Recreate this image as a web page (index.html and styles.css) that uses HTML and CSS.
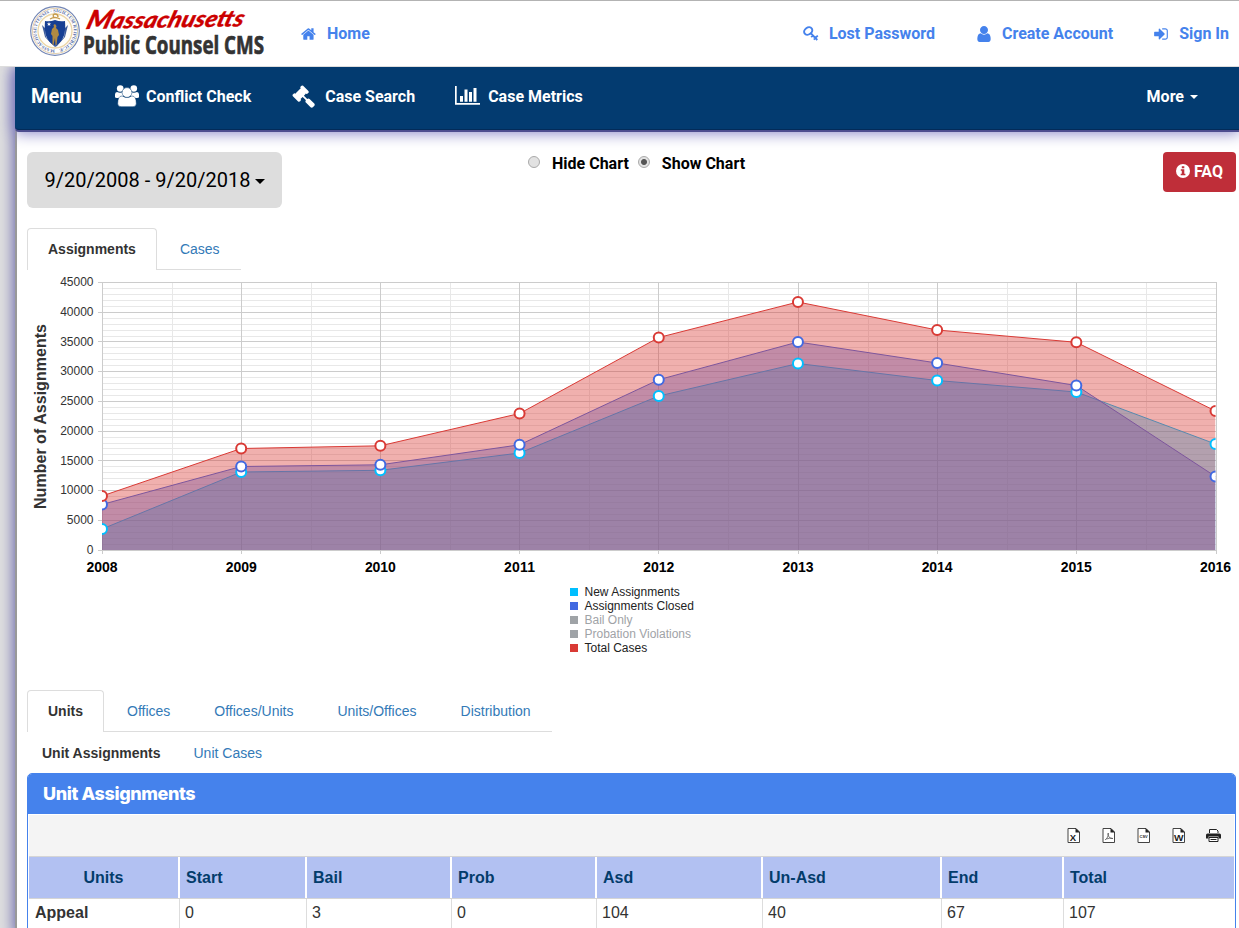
FILE: index.html
```html
<!DOCTYPE html>
<html lang="en">
<head>
<meta charset="utf-8">
<title>Massachusetts Public Counsel CMS</title>
<link rel="stylesheet" href="styles.css">
</head>
<body>
<header class="topbar">
  <svg class="logo" width="241" height="62" viewBox="28 1 241 62" role="img" aria-label="Massachusetts Public Counsel CMS">
    <defs><path id="ring" d="M55 49.5a18.7 18.7 0 1 1 .1 0"/></defs>
    <circle cx="55" cy="31" r="24.3" fill="#fff" stroke="#7386b5" stroke-width="1.2"/>
    <circle cx="55" cy="31" r="22.6" fill="none" stroke="#d9c49c" stroke-width=".8"/>
    <text class="seal-text" textLength="113" lengthAdjust="spacingAndGlyphs"><textPath href="#ring">MASSACHUSETTENSIS · SIGILLUM REIPUBLICÆ</textPath></text>
    <circle cx="55" cy="31" r="17" fill="#fffdf8" stroke="#ecd6a6" stroke-width="1.3"/>
    <path d="M42 25l3 12 9 9 1 1 2-1 8-9 3-12-3 3-1 9-9 9-9-9-1-9z" fill="#3d5c9c"/>
    <path d="M45 21q5 1 10-1 5 2 10 1c1 12-1 20-10 25-9-5-11-13-10-25z" fill="#173f93"/>
    <path d="M55 24l1.500 2-.5 2 2 2 1 5-1.500 2-1 8h-1l-.5-7-1.500 7h-1v-9l-1.500-2 1-5 2-2-.5-2z" fill="#b18a43"/>
    <path d="M49 22l.6 1.500h1.600l-1.300 1 .5 1.600-1.400-1-1.400 1 .5-1.600-1.300-1h1.600z" fill="#fff"/>
    <path d="M50 19q5-3 10 0M54 18q-2-4 1-4t3 3" fill="none" stroke="#c69b4e" stroke-width="1.400"/>
    <text class="logo-script" x="0" y="0" transform="translate(85 29) rotate(-1) skewX(-18)" textLength="157" lengthAdjust="spacingAndGlyphs"><tspan class="cap">M</tspan>assachusetts</text>
    <text class="logo-main" x="83" y="53.500" textLength="181" lengthAdjust="spacingAndGlyphs">Public Counsel CMS</text>
  </svg>
  <a class="toplink home"><svg class="ic" viewBox="0 0 1792 1792"><path d="M1408 992v480q0 26-19 45t-45 19h-384v-384h-256v384h-384q-26 0-45-19t-19-45v-480q0-1 .5-3t.5-3l575-474 575 474q1 2 1 6zm223-69l-62 74q-8 9-21 11h-3q-13 0-21-7l-692-577-692 577q-12 8-24 7-13-2-21-11l-62-74q-8-10-7-23.5t11-21.5l719-599q32-26 76-26t76 26l244 204v-195q0-14 9-23t23-9h192q14 0 23 9t9 23v408l219 182q10 8 11 21.5t-7 23.5z"/></svg>Home</a>
  <nav class="account">
    <a class="toplink lost"><svg class="ic" viewBox="0 0 16 16"><g fill="none" stroke="currentColor"><ellipse cx="5.200" cy="5" rx="4.300" ry="3.400" transform="rotate(-35 5.200 5)" stroke-width="2"/><path d="M7.500 7l6.800 7M12.200 12l2.600-2.300M9.800 9.500l-1.600 1.700M12.200 12l-1.400 1.600" stroke-width="1.800"/></g></svg>Lost Password</a>
    <a class="toplink"><svg class="ic" viewBox="0 0 1536 1536"><path transform="translate(-128 -128)" d="M1536 1399q0 109-62.500 187t-150.500 78h-854q-88 0-150.500-78t-62.500-187q0-85 8.500-160.500t31.500-152 58.500-131 94-89 134.500-34.500q131 128 313 128t313-128q76 0 134.500 34.500t94 89 58.500 131 31.500 152 8.500 160.500zm-256-887q0 159-112.500 271.500t-271.500 112.500-271.500-112.500-112.500-271.500 112.500-271.500 271.500-112.500 271.500 112.500 112.500 271.500z"/></svg>Create Account</a>
    <a class="toplink"><svg class="ic" viewBox="0 0 1792 1792"><path d="M1312 896q0 26-19 45l-544 544q-19 19-45 19t-45-19-19-45v-288h-448q-26 0-45-19t-19-45v-384q0-26 19-45t45-19h448v-288q0-26 19-45t45-19 45 19l544 544q19 19 19 45zm352-352v704q0 119-84.500 203.500t-203.500 84.500h-320q-13 0-22.500-9.500t-9.500-22.500v-64q0-32 32-32h320q66 0 113-47t47-113v-704q0-66-47-113t-113-47h-320q-32 0-32-32v-64q0-32 32-32h320q119 0 203.500 84.500t84.500 203.500z"/></svg>Sign In</a>
  </nav>
</header>

<div class="page">
  <nav class="mainnav">
    <span class="brand">Menu</span>
    <a class="navlink conflict"><svg width="24" height="22" viewBox="0 0 24 22"><g fill="#fff"><circle cx="5.200" cy="3.500" r="3.300"/><circle cx="18.800" cy="3.500" r="3.300"/><path d="M0 12V9.500Q0 7 2 7q3.200 1.500 6 0 2 6-3 6H2q-2 0-2-1zM24 12V9.500Q24 7 22 7q-3.200 1.500-6 0-2 6 3 6h3q2 0 2-1z"/></g><g fill="#fff" stroke="#033b70" stroke-width=".5"><path d="M2.700 18.500q0-7.500 4.300-7.500 5 3 10 0 4.300 0 4.300 7.500 0 3.200-3.200 3.200H6q-3.300 0-3.300-3.200z"/><circle cx="12" cy="7.500" r="4.900"/></g></svg>Conflict Check</a>
    <a class="navlink search"><svg width="23" height="23" viewBox="0 0 1792 1792"><path d="M1771 1536q0 53-37 90l-107 108q-39 37-91 37-53 0-90-37l-363-364q-38-36-38-90 0-53 43-96l-256-256-126 126q-14 14-34 14t-34-14q2 2 12.500 12t12.500 13 10 11.500 10 13.500 6 13.500 5.500 16.500 1.500 18q0 38-28 68-3 3-16.500 18t-19 20.500-18.500 16.500-22 15.500-22 9-26 4.500q-40 0-68-28l-408-408q-28-28-28-68 0-13 4.500-26t9-22 15.500-22 16.500-18.500 20.500-19 18-16.500q30-28 68-28 10 0 18 1.500t16.500 5.500 13.500 6 13.500 10 11.500 10 13 12.500 12 12.500q-14-14-14-34t14-34l348-348q14-14 34-14t34 14q-2-2-12.500-12t-12.500-13-10-11.500-10-13.500-6-13.500-5.500-16.500-1.500-18q0-38 28-68 3-3 16.500-18t19-20.500 18.500-16.500 22-15.500 22-9 26-4.500q40 0 68 28l408 408q28 28 28 68 0 13-4.500 26t-9 22-15.500 22-16.500 18.500-20.500 19-18 16.500q-30 28-68 28-10 0-18-1.500t-16.500-5.500-13.500-6-13.500-10-11.500-10-13-12.500-12-12.500q14 14 14 34t-14 34l-126 126 256 256q43-43 96-43 52 0 91 37l363 363q37 39 37 91z"/></svg>Case Search</a>
    <a class="navlink metrics"><svg width="25" height="20" viewBox="0 0 25 20"><path d="M0 0h1.700v17H25v1.700H0zM5 10h3v5.700H5zM9.500 3.500h3v12.200h-3zM14 6h3v9.700h-3zM18.500 2h3v13.700h-3z"/></svg>Case Metrics</a>
    <a class="navlink more">More<i class="caret"></i></a>
  </nav>

  <main class="content">
    <section class="controls">
      <button class="daterange">9/20/2008 - 9/20/2018<i class="caret"></i></button>
      <div class="toggle">
        <label><span class="radio"></span>Hide Chart</label>
        <label><span class="radio on"></span>Show Chart</label>
      </div>
      <button class="faq"><svg width="14" height="14" viewBox="0 0 14 14"><circle cx="7" cy="7" r="7" fill="#fff"/><path d="M5.800 2.200h2.500v2H5.800zM4.800 5.300h3.500v4.500h1.100v1.500H4.700V9.800h1.100v-3h-1z" fill="#bf2e39"/></svg>FAQ</button>
    </section>

    <ul class="tabs chart-tabs"><li class="tab active">Assignments</li><li class="tab">Cases</li></ul>

    <svg class="chart" width="1222" height="390" viewBox="17 270 1222 390">
      <defs><clipPath id="plot"><rect x="102" y="280" width="1113.500" height="270"/></clipPath></defs>
      <g id="grid"></g>
      <g id="series" clip-path="url(#plot)"></g>
      <g id="labels"></g>
      <text class="axis-title" transform="translate(46 509) rotate(-90)" textLength="185">Number of Assignments</text>
      <g class="legend">
        <rect x="570" y="588" width="8" height="8" fill="#00bfff"/><text x="584.500" y="596">New Assignments</text>
        <rect x="570" y="602" width="8" height="8" fill="#4169e1"/><text x="584.500" y="610">Assignments Closed</text>
        <rect x="570" y="616" width="8" height="8" fill="#9fa3a7"/><text class="off" x="584.500" y="624">Bail Only</text>
        <rect x="570" y="630" width="8" height="8" fill="#9fa3a7"/><text class="off" x="584.500" y="638">Probation Violations</text>
        <rect x="570" y="644" width="8" height="8" fill="#d93a35"/><text x="584.500" y="652">Total Cases</text>
      </g>
    </svg>

    <ul class="tabs unit-tabs"><li class="tab active">Units</li><li class="tab">Offices</li><li class="tab">Offices/Units</li><li class="tab">Units/Offices</li><li class="tab">Distribution</li></ul>
    <div class="subtabs"><b>Unit Assignments</b><a>Unit Cases</a></div>

    <section class="panel">
      <h2 class="panel-title">Unit Assignments</h2>
      <div class="panel-body">
        <div class="toolbar">
          <svg class="tool" viewBox="0 0 15 15"><path class="doc" d="M2 .5h8l3.500 3.500v10.500H2z"/><path class="fold" d="M9.500 0L14 4.500H9.500z"/><text x="3.800" y="12.800">X</text></svg>
          <svg class="tool" viewBox="0 0 15 15"><path class="doc" d="M2 .5h8l3.500 3.500v10.500H2z"/><path class="fold" d="M9.500 0L14 4.500H9.500z"/><path class="doc thin" d="M4 12q2.400-1.500 3.200-4.500.5-2 0-2.500-.8 1 .2 3 1.500 3 4.500 2.500-3-1-6.500.5"/></svg>
          <svg class="tool" viewBox="0 0 15 15"><path class="doc" d="M2 .5h8l3.500 3.500v10.500H2z"/><path class="fold" d="M9.500 0L14 4.500H9.500z"/><text class="csv" x="3.500" y="9.500">CSV</text></svg>
          <svg class="tool" viewBox="0 0 15 15"><path class="doc" d="M2 .5h8l3.500 3.500v10.500H2z"/><path class="fold" d="M9.500 0L14 4.500H9.500z"/><text x="3" y="12.800" textLength="9.500" lengthAdjust="spacingAndGlyphs">W</text></svg>
          <svg class="tool" viewBox="0 0 15 15"><path d="M3.500 5V1.500h7L12 3v2" fill="#fff" stroke="#222"/><path d="M0 7q0-1.500 1.500-1.500h12Q15 5.500 15 7v3.500h-2.500v-2h-10v2H0z" fill="#222"/><path d="M3 9.500h9V13.500H3zM4.500 11.500h6" fill="#fff" stroke="#222"/></svg>
        </div>
        <div class="row head"><span>Units</span><span>Start</span><span>Bail</span><span>Prob</span><span>Asd</span><span>Un-Asd</span><span>End</span><span>Total</span></div>
        <div class="row"><span>Appeal</span><span>0</span><span>3</span><span>0</span><span>104</span><span>40</span><span>67</span><span>107</span></div>
      </div>
    </section>
  </main>
</div>
<script src="chart.js"></script>
</body>
</html>
```
FILE: chart.js
```js
const X0 = 102, DX = 139.19, BOTTOM = 550, PX = 267.5 / 45000;
const xs = [...Array(9).keys()].map(i => X0 + i * DX);
const snap = v => Math.floor(v) + 0.5;
let grid = '';
for (let v = 1000; v < 45000; v += 1000) {
  const y = snap(BOTTOM - v * PX);
  if (v % 5000) grid += `<path class="minor" d="M102 ${y}H1216"/>`;
}
xs.slice(0, 8).forEach(x => grid += `<path class="minor" d="M${snap(x + DX / 2 + 0.6)} 282V550"/>`);
for (let v = 0; v <= 45000; v += 5000) grid += `<path class="major" d="M98 ${snap(BOTTOM - v * PX)}H1217"/>`;
xs.forEach((x, i) => grid += `<path class="major" d="M${i === 8 ? 1216.5 : snap(x + 0.1)} 282V554"/>`);
document.getElementById('grid').innerHTML = grid;

// Vertical positions of each yearly value, 2008 to 2016
const series = [
  ['#00bfff', [529, 472, 470.3, 453, 396, 363.5, 380.5, 392, 444]],
  ['#4169e1', [504.5, 466.5, 464.8, 444.8, 379.7, 342, 363, 385.5, 476.5]],
  ['#d93a35', [496, 448.5, 445.8, 413.5, 337.5, 302, 330, 342.3, 411]]
];
let out = '';
series.forEach(([c, ys]) => {
  const pts = ys.map((y, i) => `${xs[i]},${y}`).join(' ');
  out += `<polygon points="102,550 ${pts} ${xs[8]},550" fill="${c}" fill-opacity=".4"/><polyline points="${pts}" fill="none" stroke="${c}"/>`;
});
// The translucent layers tint the lines beneath, the markers stay on top
series.forEach(([c, ys]) => ys.forEach((y, i) => {
  out += `<circle cx="${xs[i]}" cy="${y}" r="5" fill="#fff" stroke="${c}" stroke-width="2"/>`;
}));
document.getElementById('series').innerHTML = out;

let labels = '';
for (let v = 0; v <= 45000; v += 5000) labels += `<text class="ytick" x="93.5" y="${Math.round(BOTTOM - v * PX + 3.8)}">${v}</text>`;
xs.forEach((x, i) => labels += `<text class="xtick" x="${x}" y="572" textLength="31">${2008 + i}</text>`);
document.getElementById('labels').innerHTML = labels;
```
FILE: styles.css
```css
* { box-sizing: border-box; }
body { margin: 0; height: 928px; overflow: hidden; background: #e0e0e0; font-family: "Liberation Sans", Arial, sans-serif; font-size: 14px; color: #333; }
svg { fill: currentColor; flex: none; }
.topbar { position: relative; z-index: 2; display: flex; align-items: center; height: 67px; padding: 0 10px 0 28px; background: #fff; border-top: 1px solid #b3b3b3; border-bottom: 1px solid #ddd; }
.logo { display: block; margin-bottom: 3px; overflow: visible; }
.seal-text { font: bold 4.5px "Liberation Serif", serif; fill: #4f68a5; }
.logo-script { font: italic 900 23px Lato, sans-serif; fill: #c00; stroke: #c00; stroke-width: .3px; }
.logo-script .cap { font-size: 26px; }
.logo-main { font: bold 25px "Open Sans", sans-serif; fill: #333; stroke: #333; stroke-width: .7px; }
.toplink { display: flex; align-items: center; gap: 10px; font: bold 16px/20px Roboto, sans-serif; color: #4582ec; white-space: nowrap; }
.toplink.home { margin-left: 32px; }
.ic { width: 16px; height: 16px; }
.account { display: flex; gap: 40px; margin-left: auto; }
.lost { margin-right: 1px; }
.page { position: relative; z-index: 1; height: 870px; margin-left: 15px; background: #fff; box-shadow: 0 0 15px #4f4ca0; }
.mainnav { position: relative; z-index: 1; display: flex; align-items: center; height: 63px; padding: 0 41px 4px 16px; background: #033b70; border-bottom: 1px solid #032b59; border-radius: 0 0 0 4px; box-shadow: 0 2px 0 #4d4d8f, 0 2px 15px 1px #8582c6; color: #fff; }
.brand { font: bold 20px Roboto, sans-serif; width: 84px; }
.navlink { display: flex; align-items: center; font: bold 16px Roboto, sans-serif; white-space: nowrap; }
.conflict { gap: 7px; }
.search { margin-left: 41px; gap: 10px; }
.metrics { margin-left: 40px; gap: 8px; }
.more { margin-left: auto; }
.caret { display: inline-block; border: 4px solid transparent; border-top-color: currentColor; border-bottom: 0; margin: 2px 0 0 6px; }
.content { height: 807px; padding: 22px 3px 0 10px; border-left: 2px solid #999; background: #fff; }
.controls { display: grid; grid-template-columns: 501px 1fr auto; align-items: start; height: 76px; }
button { border: 0; padding: 0; }
.daterange { display: flex; align-items: center; justify-content: center; width: 255px; height: 56px; padding-left: 1px; background: #ddd; border-radius: 6px; font: 20px Roboto, sans-serif; color: #000; }
.daterange .caret { border-width: 5px 5px 0; margin-left: 5px; }
.toggle { display: flex; gap: 9px; font: bold 16px/24px Roboto, sans-serif; color: #000; }
.toggle label { display: flex; align-items: center; gap: 12px; }
.radio { width: 12px; height: 12px; margin-bottom: 4px; border: 1px solid #aaa; border-radius: 50%; background: #e2e2e2; }
.radio.on { background: radial-gradient(circle, #555 0 2.5px, #e2e2e2 3.5px); }
.faq { display: flex; align-items: center; justify-content: center; gap: 4px; width: 73px; height: 40px; padding-bottom: 2px; border-radius: 4px; background: #bf2e39; color: #fff; font: bold 16px Roboto, sans-serif; }
.tabs { display: flex; width: max-content; height: 42px; margin: 0; padding: 0; list-style: none; border-bottom: 1px solid #ddd; }
.tab { height: 42px; padding: 0 21px; margin-right: 2px; line-height: 42px; color: #337ab7; }
.tab:last-child { margin-right: 0; }
.tab.active { font-weight: bold; color: #333; background: #fff; border: 1px solid #ddd; border-bottom: 0; border-radius: 4px 4px 0 0; padding: 0 20px; line-height: 40px; }
.chart { display: block; margin-left: -10px; }
.minor { stroke: #e8e8e8; fill: none; }
.major { stroke: #ccc; fill: none; }
.ytick { font-size: 12px; text-anchor: end; fill: #333; }
.xtick { font-size: 14px; font-weight: bold; text-anchor: middle; fill: #000; }
.axis-title { font-size: 16px; font-weight: bold; fill: #333; }
.legend { font-size: 12px; fill: #222; }
.legend .off { fill: #9fa3a7; }
.unit-tabs { margin-top: 30px; }
.subtabs { display: flex; gap: 33px; height: 41px; padding-left: 15px; line-height: 42px; }
.subtabs a { color: #337ab7; }
.panel { height: 180px; border: 1px solid #4582ec; border-radius: 5px 5px 0 0; }
.panel-title { height: 40px; margin: 0; padding-left: 15px; background: #4582ec; border-radius: 4px 4px 0 0; color: #fff; font: 800 18px/40px Inter, sans-serif; letter-spacing: -.4px; }
.panel-body { padding: 1px; }
.toolbar { display: flex; justify-content: flex-end; gap: 20px; height: 42px; padding: 13px 13px 0; background: #f4f4f4; border-bottom: 1px solid #d5d5d5; }
.tool { width: 15px; height: 15px; }
.doc { fill: #fff; stroke: #444; }
.doc.thin { fill: none; stroke-width: .7px; }
.fold { fill: #222; }
.tool text { font: bold 9.5px "Liberation Sans", sans-serif; fill: #222; }
.tool .csv { font: bold 4px "Liberation Sans", sans-serif; }
.row { display: grid; grid-template-columns: 151px 127px 145px 145px 166px 179px 122px 1fr; height: 42px; font-size: 16px; }
.row span { padding: 5px 0 0 5px; border-right: 1px solid #ddd; }
.row span:last-child { border-right: 0; }
.row span:first-child { font-weight: bold; padding-left: 6px; }
.head { border-bottom: 1px solid #d5d5d5; font-weight: bold; color: #033c6b; }
.head span { background: #b2c1f2; border-right: 2px solid #fff; padding: 0 0 0 6px; line-height: 41px; }
.row.head span:first-child { padding: 0; text-align: center; }
```
